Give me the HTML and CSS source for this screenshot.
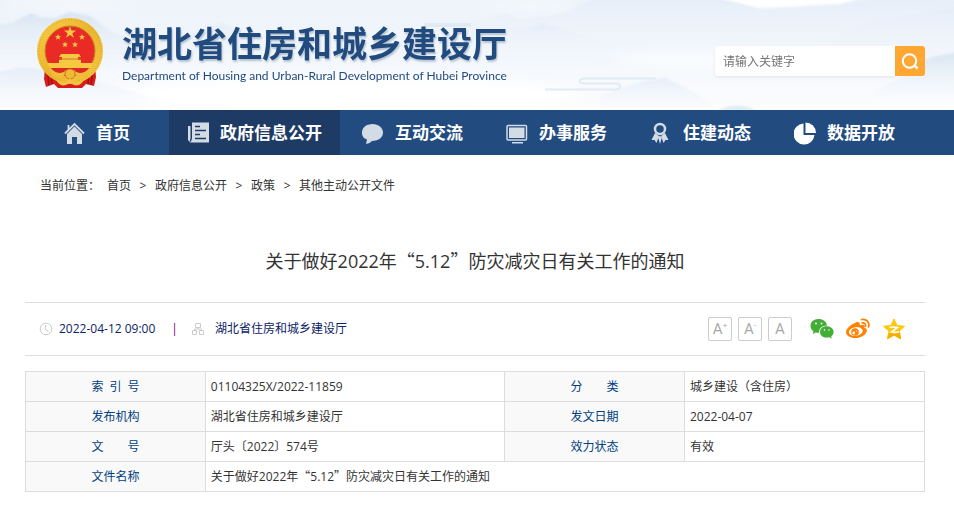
FILE: index.html
```html
<!DOCTYPE html>
<html lang="zh-CN">
<head>
<meta charset="utf-8">
<meta name="viewport" content="width=device-width, initial-scale=1">
<title>湖北省住房和城乡建设厅</title>
<link rel="stylesheet" href="styles.css">
</head>
<body>
<header class="banner">
  <svg class="scenery" viewBox="0 0 954 110" preserveAspectRatio="none" aria-hidden="true">
    <defs>
      <linearGradient id="sky" x1="0" y1="0" x2="0" y2="1"><stop offset="0" stop-color="#edf3fa"/><stop offset=".55" stop-color="#f3f7fc"/><stop offset="1" stop-color="#fdfdfe"/></linearGradient>
      <linearGradient id="peak" x1="0" y1="0" x2="0" y2="1"><stop offset="0" stop-color="#d8e5f2"/><stop offset="1" stop-color="#f2f6fc" stop-opacity="0"/></linearGradient>
      <linearGradient id="mist" x1="0" y1="0" x2="0" y2="1"><stop offset="0" stop-color="#e5edf8"/><stop offset="1" stop-color="#f4f7fc" stop-opacity="0"/></linearGradient>
      <filter id="soft"><feGaussianBlur stdDeviation="1"/></filter>
      <filter id="haze" x="-30%" y="-50%" width="160%" height="200%"><feGaussianBlur stdDeviation="7"/></filter>
    </defs>
    <rect width="954" height="110" fill="url(#sky)"/>
    <g filter="url(#haze)" fill="#fff"><ellipse cx="70" cy="4" rx="70" ry="5" opacity=".6"/><ellipse cx="350" cy="95" rx="230" ry="18"/><ellipse cx="530" cy="5" rx="50" ry="5" opacity=".6"/><ellipse cx="690" cy="58" rx="80" ry="9" opacity=".7"/></g>
    <g filter="url(#soft)">
      <path d="M-5 25L12 23 31 13 42 18 55 18 70 12 90 16 110 31 128 38 145 46 150 70H-5z" fill="url(#peak)"/>
      <path d="M-5 73L20 67 48 70 80 78 120 88 160 100 165 110H-5z" fill="url(#mist)"/>
      <path d="M185 35L215 26 223 23 232 28 260 40V60H185z" fill="url(#mist)"/>
      <path d="M470 25L495 16 507 14 520 20 545 17 565 12 585 3 600 -4H720L760 9 790 8 830 3 870 0H960V65H470z" fill="url(#mist)"/>
      <path d="M490 38L510 30 530 28 543 23 555 27 600 40V55H490z" fill="url(#mist)"/>
      <path d="M820 44L850 28 880 18 920 14 960 5V60H820z" fill="url(#mist)"/>
      <path d="M870 95L905 75 930 57 960 52V102H870z" fill="url(#peak)"/>
      <path d="M600 110V96L640 82 665 78 690 90 720 108z" fill="url(#mist)"/>
      <path d="M718 110Q738 102 756 110z" fill="#dfe9f3"/>
      <path d="M710 -4H870L840 4 800 6 760 8z" fill="#fff"/>
    </g>
    <path d="M424 25h47" stroke="#e0eaf5" stroke-width="4"/>
    <path d="M545 89.500h70c7 0 7-6 0-6h-30c-7 0-7-5 0-5h71" fill="none" stroke="#e2ebf5" stroke-width="2"/>
  </svg>
  <div class="banner-inner">
    <a class="brand" href="#">
      <svg class="emblem" viewBox="0 0 68 72" aria-hidden="true">
        <defs><linearGradient id="gold" x1="0" y1="0" x2="1" y2="1"><stop offset="0" stop-color="#f8ca45"/><stop offset=".5" stop-color="#eab52f"/><stop offset="1" stop-color="#f5c642"/></linearGradient></defs>
        <path d="M9 50L15 53 53 53 59 49 60 60 58 69 50 67 46 71H22L18 67 10 70 8 62z" fill="#d91c1c"/>
        <path d="M11 52l2 16M15 55l1 12M57 52l-2 16M53 55l-1 12" stroke="#9f1213" stroke-width="1.500"/>
        <circle cx="34" cy="34" r="29" fill="#e92a25" stroke="url(#gold)" stroke-width="8"/>
        <circle cx="34" cy="34" r="31" fill="none" stroke="#d79e24" stroke-dasharray="1 2"/>
        <circle cx="34" cy="34" r="25" fill="none" stroke="#c98522" stroke-width="1"/>
        <g fill="#f7c943">
          <path d="M34 9l1.500 4.500h4.700l-3.800 2.800 1.500 4.500-3.900-2.800-3.900 2.800 1.500-4.500-3.800-2.800h4.700z"/>
          <path d="M22 17l.8 2h2.200l-1.700 1.500.6 2.200-1.900-1.300-1.900 1.300.6-2.200-1.700-1.500h2.200zM46 17l.8 2h2.200l-1.700 1.500.6 2.200-1.900-1.300-1.900 1.300.6-2.200-1.700-1.500h2.200zM29 24.500l.8 2h2.200l-1.700 1.500.6 2.200-1.900-1.300-1.900 1.300.6-2.200-1.700-1.500h2.200zM39 24.500l.8 2h2.200l-1.700 1.500.6 2.200-1.900-1.300-1.900 1.300.6-2.200-1.700-1.500h2.200z"/>
          <path d="M25 37h18l2 3h-3v3h3v4H23v-4h3v-3h-3z"/>
          <path d="M11 46h46l-3 5H14z"/>
        </g>
        <path d="M23 42h22" stroke="#c97b20"/>
        <path d="M15 51h38l-7 8H22z" fill="#de2822"/>
        <path d="M13 51q12 9 17 2h8q5 7 17-2l-4 8q-8 4-12-1H29q-6 5-12 1z" fill="#f1bd38"/>
        <circle cx="34" cy="57" r="5" fill="#efba36" stroke="#c97b20"/>
        <path d="M20 62q10 6 14-1 4 7 14 1-3 8-10 6l-4-2-4 2q-7 2-10-6z" fill="#f3c444"/>
      </svg>
      <span class="brand-text">
        <strong>湖北省住房和城乡建设厅</strong>
        <span class="brand-en">Department of Housing and Urban-Rural Development of Hubei Province</span>
      </span>
    </a>
    <form class="search">
      <input type="text" placeholder="请输入关键字" aria-label="请输入关键字">
      <button type="button" aria-label="搜索"><svg viewBox="0 0 30 30"><circle cx="14.500" cy="15" r="6.700" fill="none" stroke="#fff" stroke-width="2"/><path d="M19 19l3.500 3.500" stroke="#fff" stroke-width="2.500"/></svg></button>
    </form>
  </div>
</header>
<nav class="nav">
  <a class="home" href="#"><svg viewBox="0 0 24 24"><path d="M2 12.500L11.500 3 21 12.500M5.500 9V4" fill="none" stroke="currentColor" stroke-width="1.800"/><path d="M4 13l7.500-7.500L19 13v10h-5v-7H9v7H4z" fill="currentColor"/></svg>首页</a>
  <a class="active" href="#"><svg viewBox="0 0 24 24"><path d="M5 1.500h17v20H2.500Q5 20 5 17zM1 5h2.500v12.500L2.500 21 1 19z" fill="currentColor"/><path d="M8 5.500h5M8 9.500h11M8 13.500h5M8 17.500h11" stroke="#1d3b65" stroke-width="1.500"/></svg>政府信息公开</a>
  <a href="#"><svg viewBox="0 0 24 24"><path d="M10.500 3C4.500 3 0 6.500 0 11.500c0 4 2 6 5 7L4 23q4-.5 6-3c7 0 11-4 11-8.500S16.500 3 10.500 3z" fill="currentColor"/></svg>互动交流</a>
  <a href="#"><svg viewBox="0 0 24 24"><rect x="1" y="4.500" width="19.500" height="14.500" rx="1" fill="none" stroke="currentColor" stroke-width="1.500"/><path d="M3 6.500h15.500V17H3zM6 21h11v1.500H6z" fill="currentColor"/></svg>办事服务</a>
  <a href="#"><svg viewBox="0 0 24 24"><circle cx="10" cy="8" r="5" fill="none" stroke="currentColor" stroke-width="2.500"/><path d="M5 12l4 3-2.500 7-2-3H1.500zM15 12l-4 3 2.500 7 2-3h3zM8 16l2-1 2 1-2 7z" fill="currentColor"/></svg>住建动态</a>
  <a class="bright" href="#"><svg viewBox="0 0 24 24"><path d="M9.500 2.500V14h11A10.500 10.500 0 1 1 9.500 2.500z" fill="currentColor"/><path d="M11.500 1.500A10.500 10.500 0 0 1 22 12H11.500z" fill="currentColor"/></svg>数据开放</a>
</nav>
<main class="page">
  <div class="crumbs">
    <span class="crumb-label">当前位置：</span><a href="#">首页</a><span class="sep">&gt;</span><a href="#">政府信息公开</a><span class="sep">&gt;</span><a href="#">政策</a><span class="sep">&gt;</span><a href="#">其他主动公开文件</a>
  </div>
  <h1>关于做好2022年<span class="quote">“</span>5.12<span class="quote">”</span>防灾减灾日有关工作的通知</h1>
  <div class="meta">
    <svg class="meta-icon" viewBox="0 0 14 14"><circle cx="7" cy="7" r="5.800" fill="none" stroke="#ccc"/><path d="M6.500 3v4.500l3 2" fill="none" stroke="#ccc"/></svg>
    <time>2022-04-12 09:00</time>
    <span class="divider">|</span>
    <svg class="meta-icon" viewBox="0 0 14 14"><path d="M4.500 1.500h5v4h-5zM1.500 8.500h4v4h-4zM8.500 8.500h4v4h-4zM7 5.500V7M3.500 8.500V7h7v1.500" fill="none" stroke="#ccc"/></svg>
    <span class="source">湖北省住房和城乡建设厅</span>
    <div class="tools">
      <button type="button" class="size">A<sup>+</sup></button>
      <button type="button" class="size">A<sup>-</sup></button>
      <button type="button" class="size">A</button>
      <a href="#" class="share" aria-label="微信"><svg viewBox="0 0 24 24"><path d="M8.500 2C3.500 2 .5 5 .5 8.900c0 2.300 1.200 4 3 5.400l-.8 2.600 3-1.500c1 .3 2 .4 3.300.4 0-4.300 3-7.300 8-7.300C16.500 4.500 13 2 8.500 2z" fill="#42ae35"/><path d="M16.500 9.200c-4 0-6.500 2.600-6.500 5.700s2.800 5.700 6.800 5.700c.9 0 1.800-.1 2.600-.4l2.400 1.300-.6-2.200c1.500-1 2.400-2.600 2.400-4.400 0-3.100-2.900-5.700-7.100-5.700z" fill="#42ae35"/><g fill="#fff"><circle cx="6" cy="6.500" r="1"/><circle cx="11.500" cy="6.500" r="1"/><circle cx="14.500" cy="13" r=".8"/><circle cx="19" cy="13" r=".8"/></g></svg></a>
      <a href="#" class="share" aria-label="微博"><svg viewBox="0 0 24 24"><path d="M10 5.500c2-.9 4.500-.6 3.800 2.700 3-1.100 5.700-.7 4.700 2.600 2.500.8 3 2.700 1.800 4.700-2 3.600-6.500 5.500-11 5.500C4 21 0 18.500 0 15 0 11 6 7 10 5.500z" fill="#ff8200"/><ellipse cx="9.800" cy="14.500" rx="7" ry="4.300" fill="#fff" transform="rotate(-8 9.800 14.500)"/><circle cx="9" cy="15" r="3.800" fill="#ff8200"/><circle cx="7.800" cy="16" r="1.400" fill="#fff"/><circle cx="10.500" cy="14" r=".6" fill="#fff"/><path d="M15.500 2.500c5-1 8.500 3 7 7.500M16 6c2.500-.5 4 1.200 3.500 3.200" fill="none" stroke="#ff8200" stroke-width="1.700" stroke-linecap="round"/></svg></a>
      <a href="#" class="share" aria-label="QQ空间"><svg viewBox="0 0 24 24"><path d="M12 2l3 6.500 7.500.8-5.500 5 1.700 7.700-6.700-3.800L5.300 22 7 14.300l-5.500-5L9 8.500z" fill="#ffc60b" stroke="#ffc60b" stroke-linejoin="round"/><path d="M7 16q7 2 11-1l1 7-7-3.800L5.300 22z" fill="#f4ad00"/><path d="M7.500 10.500q4-1 8 0L9.500 15q4 .8 7.500 0" fill="none" stroke="#fff" stroke-width="1.700"/></svg></a>
    </div>
  </div>
  <table class="info">
    <colgroup><col class="key"><col class="wide"><col class="key"><col></colgroup>
    <tbody>
      <tr><th scope="row">索&ensp;引&ensp;号</th><td>01104325X/2022-11859</td><th scope="row">分&emsp;&emsp;类</th><td>城乡建设（含住房）</td></tr>
      <tr><th scope="row">发布机构</th><td>湖北省住房和城乡建设厅</td><th scope="row">发文日期</th><td>2022-04-07</td></tr>
      <tr><th scope="row">文&emsp;&emsp;号</th><td>厅头〔2022〕574号</td><th scope="row">效力状态</th><td>有效</td></tr>
      <tr><th scope="row">文件名称</th><td colspan="3">关于做好2022年<span class="quote">“</span>5.12<span class="quote">”</span>防灾减灾日有关工作的通知</td></tr>
    </tbody>
  </table>
</main>
</body>
</html>
```
FILE: styles.css
```css
* { box-sizing: border-box; }
body {
  margin: 0;
  background: #fff;
  color: #333;
  font: 12px/20px "Open Sans", "Noto Sans CJK SC", sans-serif;
}
a { color: inherit; text-decoration: none; }
button { border: 0; padding: 0; cursor: pointer; }
svg { display: block; flex: none; }

.banner { position: relative; }
.scenery { position: absolute; inset: 0; width: 100%; height: 100%; }
.banner-inner {
  position: relative;
  display: flex;
  align-items: center;
  justify-content: space-between;
  height: 110px;
  padding: 0 29px 4px 36px;
}
.brand { display: flex; align-items: center; gap: 18px; color: #214b7f; }
.emblem { width: 68px; height: 72px; }
.brand-text { display: flex; flex-direction: column; gap: 6px; white-space: nowrap; }
.brand-text strong {
  font: 700 35px/40px "Noto Sans CJK SC", sans-serif;
  text-shadow: 1px 2px 2px #b6c2d0;
}
.brand-en { font: 12px/16px Lato, sans-serif; }

.search { display: flex; margin-top: 16px; }
.search input {
  width: 180px;
  height: 30px;
  border: 0;
  border-radius: 3px 0 0 3px;
  padding: 0 8px;
  background: #fff;
  box-shadow: 0 1px 3px #dfe6ee;
  font: inherit;
  outline: 0;
}
.search input::placeholder { color: #757575; }
.search button {
  width: 30px;
  height: 30px;
  border-radius: 0 3px 3px 0;
  background: #ffa733;
}

.nav {
  display: flex;
  gap: 4px;
  height: 45px;
  padding-left: 45px;
  background: #224b7f;
  color: #fff;
  font-size: 17px;
  font-weight: 700;
  white-space: nowrap;
}
.nav a { display: flex; align-items: center; gap: 9px; padding: 0 21px 0 18px; }
.nav .home { margin-right: 14px; }
.nav .active { padding: 0 18px; background: #1d3b65; }
.nav svg { width: 24px; height: 24px; color: #d3dbe5; }
.nav .bright svg { color: #fff; }

.page { padding: 21px 29px 12px 25px; }
.crumbs { display: flex; gap: 8px; padding-left: 15px; }
.crumb-label { margin-right: -1px; }
.sep { width: 8px; text-align: center; }
h1 {
  margin: 48px 0 25px;
  font-size: 18px;
  line-height: 32px;
  font-weight: 400;
  text-align: center;
}
.quote { font-family: "Noto Sans CJK SC", sans-serif; }

.meta {
  display: flex;
  align-items: center;
  height: 54px;
  padding: 0 19px 0 14px;
  border: solid #ddd;
  border-width: 1px 0;
  color: #0b2368;
}
.meta-icon { width: 14px; height: 14px; }
.meta time { margin-left: 6px; }
.divider { margin: 0 13px 0 16px; color: #800080; }
.source { margin-left: 10px; }
.tools { display: flex; align-items: center; gap: 6px; margin-left: auto; }
.size {
  width: 24px;
  height: 24px;
  border: 1px solid #ccc;
  border-radius: 2px;
  background: #fff;
  color: #aaa;
  font: 15px/20px Roboto, sans-serif;
}
.size sup { font-size: 8px; line-height: 8px; }
.share { margin-left: 12px; }
.share + .share { margin-left: 6px; }
.share svg { width: 24px; height: 24px; }

.info {
  width: 100%;
  margin-top: 15px;
  border-collapse: collapse;
  table-layout: fixed;
}
.key { width: 20%; }
.wide { width: 33.3%; }
.info th, .info td {
  height: 30px;
  padding: 0 5px;
  border: 1px solid #ddd;
  font-weight: 400;
  text-align: left;
}
.info th { background: #f9f9f9; color: #00407f; text-align: center; }
```
